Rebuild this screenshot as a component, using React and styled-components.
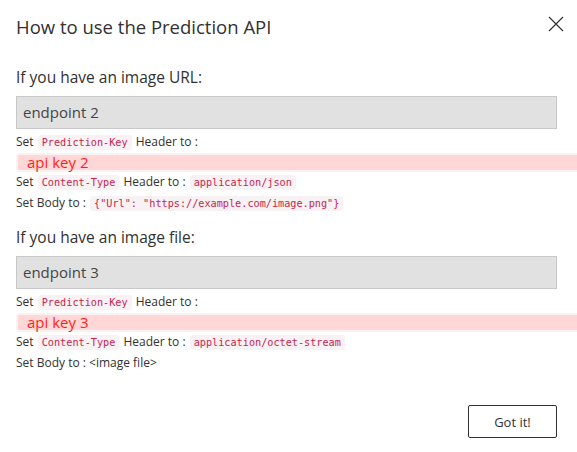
import React from 'react';
import styled, { createGlobalStyle } from 'styled-components';

const GlobalStyle = createGlobalStyle`
  html, body {
    margin: 0;
    padding: 0;
    background: #ffffff;
    overflow: hidden;
  }
  body {
    font-family: "Open Sans", "Noto Sans", sans-serif;
    color: #323130;
  }
`;

const Dialog = styled.div`
  width: 577px;
  height: 452px;
  box-sizing: border-box;
  padding: 12px 20px 0 16px;
  display: flex;
  flex-direction: column;
`;

const Header = styled.div`
  display: flex;
  justify-content: space-between;
  align-items: flex-start;
  height: 54px;
`;

const Title = styled.h2`
  margin: 3px 0 0 0;
  font-size: 18.5px;
  font-weight: 400;
  line-height: 24px;
  color: #323130;
`;

const CloseButton = styled.button`
  background: none;
  border: none;
  padding: 0;
  margin: 4px -7px 0 0;
  width: 16px;
  height: 16px;
  cursor: pointer;
  display: flex;
`;

const Section = styled.div`
  display: flex;
  flex-direction: column;
  margin-bottom: ${({ $gap }) => $gap || 0}px;
`;

const Heading = styled.div`
  font-size: 15.5px;
  line-height: 22px;
  color: #323130;
  margin-bottom: 8px;
`;

const Endpoint = styled.div`
  height: 33px;
  box-sizing: border-box;
  background: #e1e1e1;
  border: 1px solid #c8c8c8;
  padding: 0 6px;
  font-size: 15px;
  line-height: 31px;
  color: #454545;
  margin-bottom: 3px;
`;

const Line = styled.div`
  font-size: 12px;
  line-height: 20px;
  color: #323130;
  white-space: nowrap;
`;

const Code = styled.code`
  font-family: "DejaVu Sans Mono", "Liberation Mono", monospace;
  font-size: 10.2px;
  color: #c7254e;
  background: #f9f2f4;
  border-radius: 3px;
  padding: 2px 4px;
  margin: 0 1px;
`;

const KeyBlock = styled.pre`
  margin: 0 -24px 0 0;
  padding: 2px 0 2px 2px;
  background: #f9f2f4;
  border-radius: 3px;
  font-family: "Open Sans", "Noto Sans", sans-serif;
`;

const KeyText = styled.span`
  display: block;
  background: #ffd7d7;
  color: #ff1e1e;
  font-size: 15px;
  line-height: 15px;
  padding-left: 9px;
`;

const Footer = styled.div`
  margin-top: auto;
  margin-bottom: 14px;
  display: flex;
  justify-content: flex-end;
`;

const PrimaryButton = styled.button`
  width: 89px;
  height: 33px;
  background: #ffffff;
  border: 1px solid #323130;
  border-radius: 2px;
  font-family: "Open Sans", "Noto Sans", sans-serif;
  font-size: 13px;
  color: #323130;
  cursor: pointer;
`;

const CloseIcon = () => (
  <svg width="16" height="16" viewBox="0 0 16 16">
    <path d="M1 1 L15 15 M15 1 L1 15" stroke="#323130" strokeWidth="1.2" fill="none" />
  </svg>
);

const UsageSection = ({ heading, endpoint, apiKey, contentType, body, gap }) => (
  <Section $gap={gap}>
    <Heading>{heading}</Heading>
    <Endpoint>{endpoint}</Endpoint>
    <Line>
      Set <Code>Prediction-Key</Code> Header to :
    </Line>
    <KeyBlock>
      <KeyText>{apiKey}</KeyText>
    </KeyBlock>
    <Line>
      Set <Code>Content-Type</Code> Header to : <Code>{contentType}</Code>
    </Line>
    <Line>Set Body to : {body}</Line>
  </Section>
);

export default function App() {
  return (
    <>
      <GlobalStyle />
      <Dialog>
        <Header>
          <Title>How to use the Prediction API</Title>
          <CloseButton aria-label="Close">
            <CloseIcon />
          </CloseButton>
        </Header>
        <UsageSection
          heading="If you have an image URL:"
          endpoint="endpoint 2"
          apiKey="api key 2"
          contentType="application/json"
          body={<Code>{'{"Url": "https://example.com/image.png"}'}</Code>}
          gap={12}
        />
        <UsageSection
          heading="If you have an image file:"
          endpoint="endpoint 3"
          apiKey="api key 3"
          contentType="application/octet-stream"
          body="<image file>"
        />
        <Footer>
          <PrimaryButton>Got it!</PrimaryButton>
        </Footer>
      </Dialog>
    </>
  );
}
